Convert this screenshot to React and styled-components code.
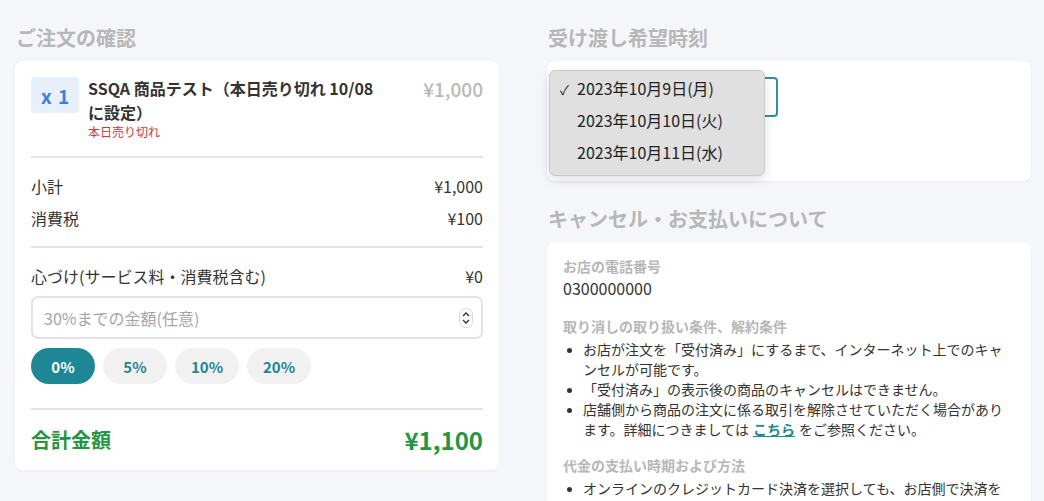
import React from "react";
import styled, { createGlobalStyle } from "styled-components";

const GlobalStyle = createGlobalStyle`
  html, body {
    margin: 0;
    padding: 0;
    background: #f5f6fa;
  }
  body {
    font-family: "Noto Sans CJK JP", "Noto Sans", sans-serif;
    color: #333;
  }
`;

const Page = styled.div`
  display: grid;
  grid-template-columns: 484px 484px;
  column-gap: 48px;
  padding: 24px 0 0 15px;
  align-items: start;
`;

const Column = styled.section`
  display: flex;
  flex-direction: column;
`;

const Heading = styled.h2`
  margin: ${props => (props.spaced ? "24px" : "0")} 0 9px 1px;
  font-size: 20px;
  line-height: 28px;
  font-weight: 700;
  color: #b7b7b7;
`;

const Card = styled.div`
  background: #fff;
  border-radius: 8px;
  box-shadow: 0 1px 3px rgba(0, 0, 0, 0.05);
  padding: ${props => props.top || "16px"} 16px 16px;
`;

const ItemRow = styled.div`
  display: flex;
  align-items: flex-start;
  gap: 9px;
`;

const Qty = styled.div`
  flex: none;
  width: 48px;
  height: 36px;
  border-radius: 4px;
  background: #e8f0fe;
  color: #3b7de6;
  font-size: 19px;
  font-weight: 700;
  word-spacing: 2px;
  display: flex;
  align-items: center;
  justify-content: center;
`;

const ItemInfo = styled.div`
  flex: 1;
`;

const ItemName = styled.div`
  max-width: 292px;
  font-size: 16px;
  font-weight: 700;
  line-height: 24px;
  margin-top: -1px;
`;

const SoldOut = styled.div`
  font-size: 12px;
  line-height: 16px;
  color: #dd3333;
`;

const ItemPrice = styled.div`
  flex: none;
  font-size: 19px;
  line-height: 24px;
  font-weight: 500;
  color: #b8b8b8;
`;

const Divider = styled.hr`
  border: none;
  height: 2px;
  background: #e4e4e6;
  margin: ${props => props.m || "16px 0 12px"};
`;

const Line = styled.div`
  display: flex;
  justify-content: space-between;
  align-items: center;
  height: 32px;
  font-size: 16px;
  color: #333;
`;

const InputBox = styled.div`
  display: flex;
  align-items: center;
  height: 43px;
  box-sizing: border-box;
  border: 2px solid #e2e2e8;
  border-radius: 7px;
  padding: 0 8px 0 9px;
  margin-top: 4px;
`;

const TipInput = styled.input`
  flex: 1;
  border: none;
  outline: none;
  background: transparent;
  font-family: inherit;
  font-size: 16px;
  color: #333;
  &::placeholder {
    color: #a4a4ac;
  }
`;

const Chips = styled.div`
  display: flex;
  gap: 8px;
  margin-top: 9px;
`;

const Chip = styled.button`
  width: 64px;
  height: 36px;
  border: none;
  border-radius: 18px;
  font-family: inherit;
  font-size: 15px;
  font-weight: 700;
  background: ${props => (props.active ? "#1e8795" : "#f1f1f1")};
  color: ${props => (props.active ? "#fff" : "#1e8795")};
`;

const Total = styled.div`
  display: flex;
  justify-content: space-between;
  align-items: center;
  height: 30px;
  color: #23963f;
  font-weight: 700;
  font-size: 20px;
`;

const TotalPrice = styled.span`
  font-size: 24px;
`;

const SelectWrap = styled.div`
  position: relative;
  width: 215px;
  height: 40px;
  margin-bottom: 48px;
`;

const SelectBox = styled.div`
  height: 100%;
  box-sizing: border-box;
  border: 2px solid #2a93a0;
  border-radius: 4px;
`;

const Menu = styled.ul`
  position: absolute;
  left: -14px;
  top: -7px;
  width: 216px;
  box-sizing: border-box;
  margin: 0;
  padding: 1px 0 7px;
  list-style: none;
  background: #e0e0e0;
  border: 1px solid #c9c9c9;
  border-radius: 6px;
  box-shadow: 0 4px 12px rgba(0, 0, 0, 0.12);
`;

const MenuItem = styled.li`
  display: flex;
  align-items: center;
  height: 32px;
  font-size: 16px;
  color: #222;
`;

const Check = styled.span`
  width: 27px;
  padding: 3px 0 0 10px;
  box-sizing: border-box;
  font-size: 13px;
`;

const Label = styled.div`
  font-size: 14px;
  font-weight: 700;
  line-height: 20px;
  color: #b7b7b7;
  margin-top: ${props => (props.first ? "0" : "16px")};
`;

const Phone = styled.div`
  font-size: 16px;
  line-height: 24px;
`;

const Bullets = styled.ul`
  margin: 3px 0 0;
  padding-left: 20px;
  font-size: 14px;
  line-height: 20px;
  color: #333;
  li::marker {
    font-size: 12px;
  }
`;

const Link = styled.a`
  color: #1e8795;
  font-weight: 700;
  text-decoration: underline;
  padding: 0 4px;
`;

function Spinner() {
  return (
    <svg width="14" height="20" viewBox="0 0 14 20">
      <rect x="0.5" y="0.5" width="13" height="19" rx="6" fill="#fff" stroke="#d8d8d8" />
      <path d="M4 8 L7 5 L10 8" fill="none" stroke="#333" strokeWidth="1.3" />
      <path d="M4 12 L7 15 L10 12" fill="none" stroke="#333" strokeWidth="1.3" />
    </svg>
  );
}

const dates = ["2023年10月9日(月)", "2023年10月10日(火)", "2023年10月11日(水)"];

export default function App() {
  const [tip, setTip] = React.useState(0);

  return (
    <>
      <GlobalStyle />
      <Page>
        <Column>
          <Heading>ご注文の確認</Heading>
          <Card>
            <ItemRow>
              <Qty>x 1</Qty>
              <ItemInfo>
                <ItemName>SSQA 商品テスト（本日売り切れ 10/08 に設定）</ItemName>
                <SoldOut>本日売り切れ</SoldOut>
              </ItemInfo>
              <ItemPrice>¥1,000</ItemPrice>
            </ItemRow>
            <Divider />
            <Line>
              <span>小計</span>
              <span>¥1,000</span>
            </Line>
            <Line>
              <span>消費税</span>
              <span>¥100</span>
            </Line>
            <Divider m="12px 0 12px" />
            <Line>
              <span>心づけ(サービス料・消費税含む)</span>
              <span>¥0</span>
            </Line>
            <InputBox>
              <TipInput placeholder="30%までの金額(任意)" />
              <Spinner />
            </InputBox>
            <Chips>
              {[0, 5, 10, 20].map(p => (
                <Chip key={p} active={tip === p} onClick={() => setTip(p)}>
                  {p}%
                </Chip>
              ))}
            </Chips>
            <Divider m="24px 0 14px" />
            <Total>
              <span>合計金額</span>
              <TotalPrice>¥1,100</TotalPrice>
            </Total>
          </Card>
        </Column>

        <Column>
          <Heading>受け渡し希望時刻</Heading>
          <Card>
            <SelectWrap>
              <SelectBox />
              <Menu>
                {dates.map((d, i) => (
                  <MenuItem key={d}>
                    <Check>{i === 0 ? "✓" : ""}</Check>
                    {d}
                  </MenuItem>
                ))}
              </Menu>
            </SelectWrap>
          </Card>
          <Heading spaced>キャンセル・お支払いについて</Heading>
          <Card top="14px">
            <Label first>お店の電話番号</Label>
            <Phone>0300000000</Phone>
            <Label>取り消しの取り扱い条件、解約条件</Label>
            <Bullets>
              <li>お店が注文を「受付済み」にするまで、インターネット上でのキャンセルが可能です。</li>
              <li>「受付済み」の表示後の商品のキャンセルはできません。</li>
              <li>
                店舗側から商品の注文に係る取引を解除させていただく場合があります。詳細につきましては
                <Link>こちら</Link>をご参照ください。
              </li>
            </Bullets>
            <Label>代金の支払い時期および方法</Label>
            <Bullets>
              <li>オンラインのクレジットカード決済を選択しても、お店側で決済を行うまでは、請求は確定されません。</li>
            </Bullets>
          </Card>
        </Column>
      </Page>
    </>
  );
}
